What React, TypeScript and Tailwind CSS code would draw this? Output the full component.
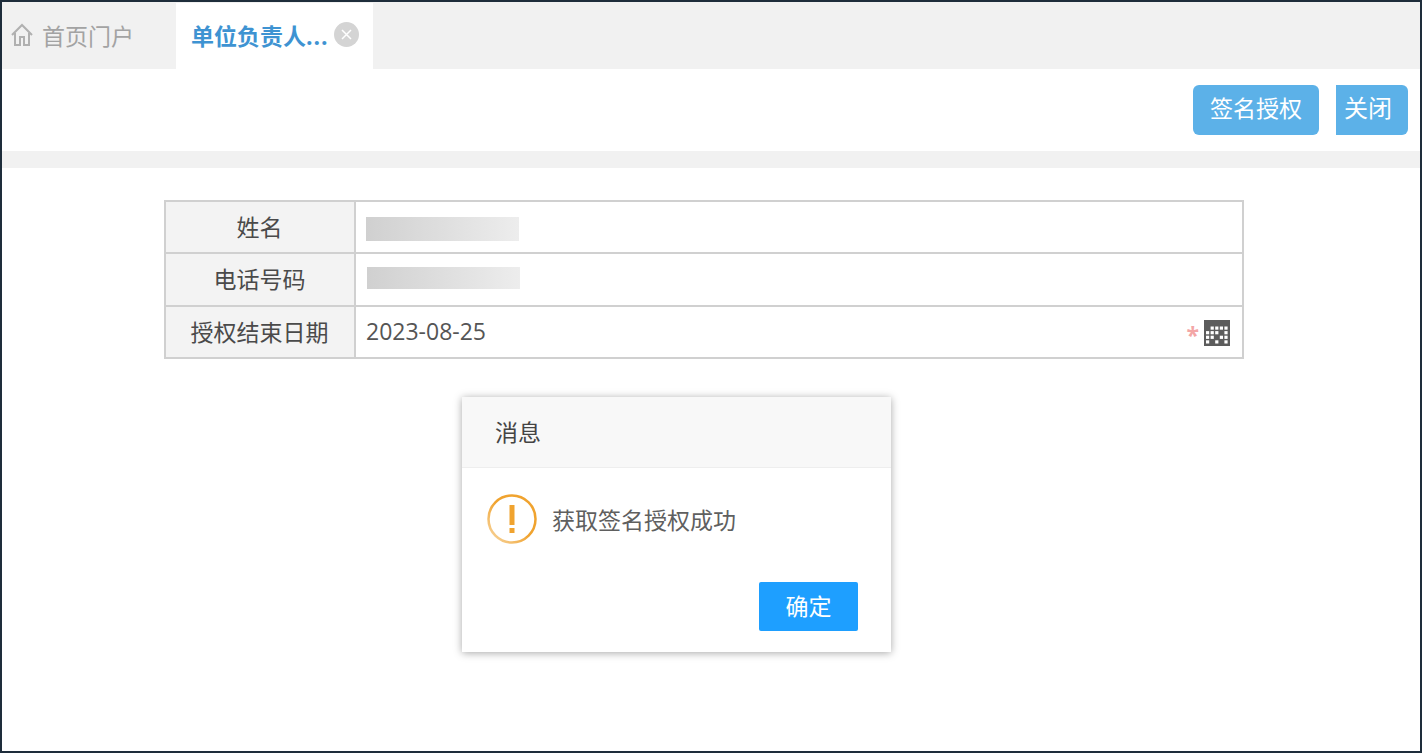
const font = { fontFamily: '"Open Sans","Noto Sans CJK SC",sans-serif' };

function Row({ label, children, cls }: { label: string; children: React.ReactNode; cls: string }) {
  return (
    <div className={`flex ${cls}`}>
      <div className="flex w-[190px] shrink-0 items-center justify-center border-r-2 border-[#d0d0d0] bg-[#f3f3f3] text-[#4a4a4a]">
        <span className="-translate-x-[0.5px]">{label}</span>
      </div>
      <div className="flex flex-1 items-center pl-[10px] pr-[12px] text-[#555]">{children}</div>
    </div>
  );
}

function Calendar() {
  const cells = [] as React.ReactNode[];
  const dark = new Set(["0,0", "2,2", "3,1", "1,3", "3,3"]);
  for (let r = 0; r < 4; r++)
    for (let c = 0; c < 5; c++)
      if (!dark.has(`${c},${r}`))
        cells.push(<rect key={`${c}-${r}`} x={2 + c * 4.6} y={6.5 + r * 4.6} width="3.2" height="3.2" fill="#fff" />);
  return (
    <svg width="26" height="26" viewBox="0 0 26 26" className="mt-[2px]">
      <rect width="26" height="26" fill="#5c5c5c" />
      {cells}
    </svg>
  );
}

export default function App() {
  return (
    <div style={font} className="relative h-[753px] w-[1422px] overflow-hidden border-2 border-[#1e2d3b] bg-white text-[23px]">
      <div className="flex h-[67px] bg-[#f1f1f1] pt-px">
        <div className="flex h-[66px] w-[174px] items-center pl-[9px] text-[#a3a3a3]">
          <svg width="22" height="24" viewBox="0 0 22 24" fill="none" stroke="#b0b0b0" strokeWidth="2" className="mr-[9px] mt-[-2px]">
            <path d="M1 12 11 2l10 10" />
            <path d="M4 10v12h5v-8h4v8h5V10" />
          </svg>
          <span className="mt-[1px]">首页门户</span>
        </div>
        <div className="flex h-[66px] w-[197px] items-center bg-white pl-[15px]">
          <span className="w-[138px] font-bold whitespace-nowrap text-[#3e93d2]">
            单位负责人<span className="tracking-[1px]">...</span>
          </span>
          <span className="mb-[4px] ml-[5px] flex h-[25px] w-[25px] items-center justify-center rounded-full bg-[#d4d4d4]">
            <svg width="13" height="13" viewBox="0 0 13 13" stroke="#fff" strokeWidth="1.5">
              <path d="M2 2l9 9M11 2l-9 9" />
            </svg>
          </span>
        </div>
      </div>

      <div className="flex h-[82px] items-start justify-end pr-[12px] pt-[16px] text-white">
        <button className="mr-[17px] h-[50px] w-[126px] rounded-[6px] bg-[#5cb1e8] pb-[3px]">签名授权</button>
        <button className="h-[50px] w-[72px] rounded-r-[6px] bg-[#5cb1e8] pb-[4px] pr-[8px] text-[24px]">关闭</button>
      </div>

      <div className="h-[17px] bg-[#f1f1f1]" />

      <div className="ml-[162px] mt-[32px] w-[1080px] border-2 border-[#d0d0d0]">
        <Row label="姓名" cls="h-[52px] border-b-2 border-[#d0d0d0]">
          <div className="mt-[4px] h-[24px] w-[153px] bg-gradient-to-r from-[#d0d0d0] to-[#ededed]" />
        </Row>
        <Row label="电话号码" cls="h-[53px] border-b-2 border-[#d0d0d0]">
          <div className="mb-[3px] ml-px h-[22px] w-[153px] bg-gradient-to-r from-[#d0d0d0] to-[#ededed]" />
        </Row>
        <Row label="授权结束日期" cls="h-[50px]">
          <span className="mb-[1px] flex-1">2023-08-25</span>
          <span className="mr-[5px] mt-[6px] font-bold text-[#f3a6a6]">*</span>
          <Calendar />
        </Row>
      </div>

      <div className="absolute left-[460px] top-[395px] w-[429px] bg-white shadow-[0_1px_8px_rgba(0,0,0,0.35)]">
        <div className="flex h-[71px] items-center border-b border-[#eee] bg-[#f8f8f8] pl-[33px] text-[#444]">消息</div>
        <div className="flex h-[101px] items-center pl-[25px] pt-[1px] text-[#666]">
          <svg width="50" height="50" viewBox="0 0 50 50" className="mr-[15px]">
            <defs>
              <linearGradient id="ring" x1="1" y1="0" x2="0" y2="1">
                <stop offset="0.5" stopColor="#f0a32f" />
                <stop offset="1" stopColor="#f8d9a8" />
              </linearGradient>
            </defs>
            <circle cx="25" cy="25" r="23.5" fill="none" stroke="url(#ring)" strokeWidth="2.5" />
            <rect x="22.5" y="11" width="5" height="20" fill="#f0a32f" />
            <rect x="22.5" y="34" width="5" height="5" fill="#f0a32f" />
          </svg>
          <span className="mt-[2px] text-[#5f5f5f]">获取签名授权成功</span>
        </div>
        <div className="flex h-[83px] justify-end pr-[33px] pt-[13px]">
          <button className="h-[49px] w-[99px] rounded-[2px] bg-[#1e9fff] text-white">确定</button>
        </div>
      </div>
    </div>
  );
}
